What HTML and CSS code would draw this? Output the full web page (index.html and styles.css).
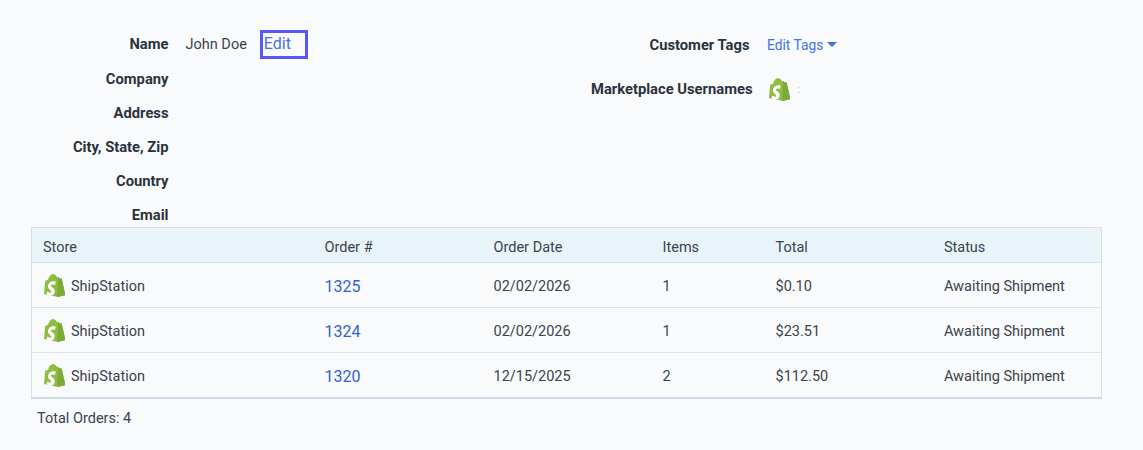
FILE: index.html
```html
<!DOCTYPE html>
<html lang="en">
<head>
<meta charset="utf-8">
<title>Customer</title>
<link rel="stylesheet" href="styles.css">
</head>
<body>
<svg class="defs" width="0" height="0" aria-hidden="true">
  <symbol id="shopify" viewBox="0 0 22 25">
    <path fill="#90bd41" d="M18.6 4.9c0-.1-.1-.2-.2-.2l-2-.1-1.500-1.500c-.1-.1-.4-.1-.5 0l-.8.2C13.100 1.900 12.400.600 11 .600h-.1C10.500.100 10 0 9.600 0 6.400 0 4.800 4 4.300 6l-2.300.7c-.7.200-.7.200-.8.900L0 20.900 14.700 24 22.500 22.200 18.600 4.900z"/>
    <path fill="#7dab3a" d="M18.400 4.700l-2-.1-1.500-1.500c-.1-.1-.1-.1-.2-.1L13.600 24l8.900-1.800L18.600 4.900c0-.1-.1-.2-.2-.2z"/>
    <path fill="#fff" d="M12.400 7.900l-1.100 3.500s-1-.5-2.200-.5c-1.800 0-1.900 1.100-1.900 1.400 0 1.600 4 2.100 4 5.700 0 2.800-1.800 4.600-4.200 4.600-2.900 0-4.300-1.800-4.300-1.800l.8-2.600s1.500 1.300 2.800 1.300c.9 0 1.200-.7 1.200-1.100 0-2-3.300-2.100-3.300-5.400 0-2.800 2-5.500 6-5.500 1.400 0 2.200.4 2.200.4z"/>
  </symbol>
</svg>
<main class="page">
  <section class="details">
    <div class="address">
      <div class="field"><span class="label">Name</span><span class="value">John Doe</span><a class="edit" href="#">Edit</a></div>
      <div class="field"><span class="label">Company</span></div>
      <div class="field"><span class="label">Address</span></div>
      <div class="field"><span class="label">City, State, Zip</span></div>
      <div class="field"><span class="label">Country</span></div>
      <div class="field"><span class="label">Email</span></div>
    </div>
    <div class="meta">
      <div class="meta-row tags"><span class="label">Customer Tags</span><a class="tag-link" href="#">Edit Tags<span class="caret"></span></a></div>
      <div class="meta-row users"><span class="label">Marketplace Usernames</span><svg class="bag-lg"><use href="#shopify"/></svg><span class="colon">:</span></div>
    </div>
  </section>
  <table class="orders">
    <thead>
      <tr><th class="c-store">Store</th><th class="c-order">Order #</th><th class="c-date">Order Date</th><th class="c-items">Items</th><th class="c-total">Total</th><th class="status">Status</th></tr>
    </thead>
    <tbody>
      <tr><td><span class="store"><svg class="bag"><use href="#shopify"/></svg>ShipStation</span></td><td><a class="order" href="#">1325</a></td><td>02/02/2026</td><td class="num">1</td><td>$0.10</td><td class="status">Awaiting Shipment</td></tr>
      <tr><td><span class="store"><svg class="bag"><use href="#shopify"/></svg>ShipStation</span></td><td><a class="order" href="#">1324</a></td><td>02/02/2026</td><td class="num">1</td><td>$23.51</td><td class="status">Awaiting Shipment</td></tr>
      <tr><td><span class="store"><svg class="bag"><use href="#shopify"/></svg>ShipStation</span></td><td><a class="order" href="#">1320</a></td><td>12/15/2025</td><td class="num">2</td><td>$112.50</td><td class="status">Awaiting Shipment</td></tr>
    </tbody>
  </table>
  <p class="total">Total Orders: 4</p>
</main>
</body>
</html>
```
FILE: styles.css
```css
* { box-sizing: border-box; }
html, body { margin: 0; height: 100%; }
body {
  background: #f9fafc;
  color: #3a424c;
  font-family: Roboto, "Liberation Sans", sans-serif;
  font-size: 14.5px;
  overflow: hidden;
}
.defs { position: absolute; }
.page { padding: 27px 41px 0 31px; }
.details { display: grid; grid-template-columns: 560px 1fr; height: 200px; }
.address { display: flex; flex-direction: column; }
.field { display: flex; align-items: center; height: 34px; padding-top: 2px; }
.field:first-child { padding-top: 0; }
.label {
  font-weight: 700;
  color: #2a323d;
  font-size: 14.75px;
  white-space: nowrap;
}
.field .label { width: 137.5px; text-align: right; }
.value { margin-left: 17px; }
.edit {
  margin-left: 13px;
  width: 48px;
  height: 29px;
  padding-left: 1px;
  line-height: 21px;
  border: 3px solid #5a55f5;
  color: #3f74e0;
  font-size: 16px;
  text-decoration: none;
}
.meta { display: flex; flex-direction: column; }
.meta-row { display: flex; align-items: center; }
.tags { height: 36px; padding-left: 58.5px; }
.tags .tag-link { margin-left: 17.5px; }
.users { height: 36px; margin-top: 8px; }
.tag-link { color: #3f74e0; font-size: 13.8px; text-decoration: none; display: flex; align-items: center; margin-top: -1px; }
.caret {
  margin-left: 4px;
  border-left: 5px solid transparent;
  border-right: 5px solid transparent;
  border-top: 5px solid #3f74e0;
}
.bag-lg { width: 21px; height: 24px; margin-left: 17px; margin-top: 2px; }
.colon { margin-left: 7px; color: #c8ccd2; font-size: 11px; }
.orders {
  width: 100%;
  table-layout: fixed;
  border-collapse: collapse;
  border: 1px solid #d5dfe9;
  border-bottom: 2px solid #cfd9e6;
}
.orders th {
  height: 35px;
  padding: 4px 0 0 11px;
  background: #e9f4fa;
  border-bottom: 1px solid #d5dfe9;
  font-weight: 400;
  text-align: left;
  color: #3a424c;
}
.orders td {
  height: 45px;
  padding: 2px 0 0 11px;
  border-bottom: 1px solid #dde3ea;
}
.orders tr:last-child td { border-bottom: 0; padding-top: 3px; }
.orders .status { padding-left: 10.4px; }
.c-store { width: 282px; }
.c-order, .c-date, .c-total { width: 169px; }
.c-items { width: 113px; }
.num { padding-left: 12px; }
.store { display: flex; align-items: center; gap: 6px; padding-left: 1px; }
.bag { width: 21px; height: 24px; margin-top: -1px; }
.order { color: #2f63cf; font-size: 16px; text-decoration: none; }
.total { margin: 11px 0 0 6px; line-height: 18px; }
```
